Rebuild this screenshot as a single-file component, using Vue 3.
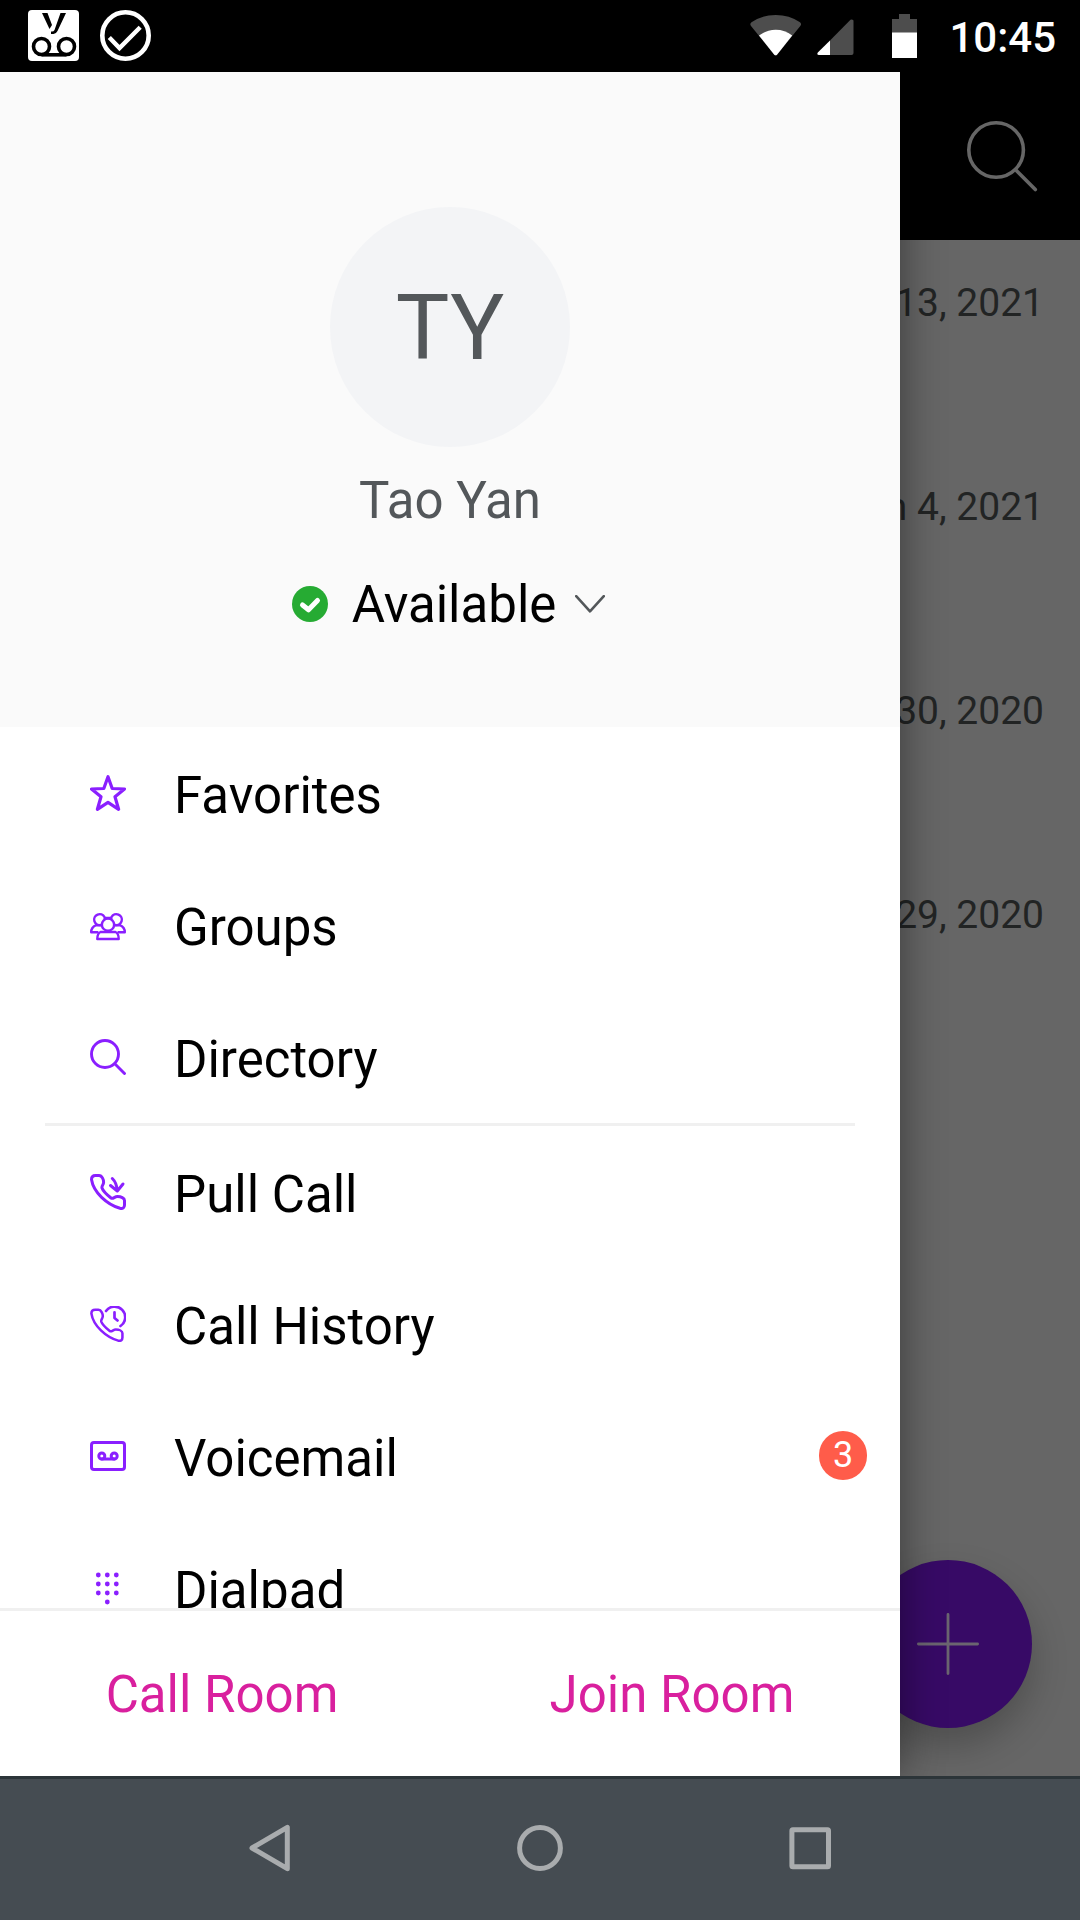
<script setup>
const conversations = ['Jan 13, 2021', 'Jan 4, 2021', 'Dec 30, 2020', 'Dec 29, 2020']

const primary = [
  { label: 'Favorites', icon: 'star' },
  { label: 'Groups', icon: 'groups' },
  { label: 'Directory', icon: 'search' },
]
const secondary = [
  { label: 'Pull Call', icon: 'pull' },
  { label: 'Call History', icon: 'history' },
  { label: 'Voicemail', icon: 'voicemail', badge: 3 },
  { label: 'Dialpad', icon: 'dialpad' },
]
const sections = [primary, secondary]

const handset =
  'M1.5 5.5C1.5 3 3 1.5 5.5 1.5H9C12 1.5 14 6 13.5 9C13.2 11 11.5 12 12 14C13 17 18.500 22 21 24C23 25.500 24.500 22.500 27.500 22.500C31 22.500 34.500 24 34.500 26.500V31C34.500 33.500 33 35 30 34.300C17 30.500 3.500 18.500 1.500 5.500Z'

const dots = []
for (let row = 0; row < 3; row++) {
  for (let col = 0; col < 3; col++) dots.push([8.3 + col * 9, 5 + row * 9])
}
dots.push([17.3, 32])
</script>

<template>
  <div class="screen">
    <header class="status">
      <div class="status-left">
        <svg width="51" height="51" viewBox="0 0 51 51">
          <rect width="51" height="51" rx="4" fill="#fff" />
          <path d="M14 3h5.500l4.500 12-2.500 4zM32.500 3h5.500l-8.500 18q-1.300 2.900-4 2.900h-2.500v-2.300h1q1.700 0 2.500-1.700z" fill="#000" />
          <g fill="none" stroke="#000" stroke-width="3.600">
            <circle cx="13.500" cy="36.500" r="8" />
            <circle cx="38.500" cy="36.500" r="8" />
            <path d="M13.500 44.800h25" />
          </g>
        </svg>
        <svg width="51" height="51" viewBox="0 0 51 51" fill="none" stroke="#fff">
          <circle cx="25.500" cy="25.500" r="23.200" stroke-width="4.600" />
          <path d="M9.300 27.500l10.200 10.500L40.200 17.200" stroke-width="4.400" />
        </svg>
      </div>
      <div class="status-right">
        <svg class="wifi" width="52" height="41" viewBox="0 0 52 41">
          <path d="M1 11Q-.6 9 1.500 7.300Q12 0 25.700 0T50 7.300Q52 9 50.300 11L27 39.700Q25.700 41 24.300 39.700z" fill="#4d4d4d" />
          <path d="M9 20.600Q16.500 14.700 25.700 14.700T42.200 20.600L27 39.700Q25.700 41 24.300 39.700z" fill="#fff" />
        </svg>
        <svg class="signal" width="37" height="36" viewBox="0 0 37 36">
          <path d="M13 36V21.500L33.500.8Q35-.3 36.500 1.500V34Q36.500 36 34.500 36z" fill="#4d4d4d" />
          <path d="M13 36V21.500L.8 33.500Q-.5 36 2 36z" fill="#fff" />
        </svg>
        <svg class="battery" width="25" height="44" viewBox="0 0 25 44">
          <path d="M7 0h11v5h7v14H0V5h7z" fill="#4d4d4d" />
          <path d="M0 18.500h25V44H0z" fill="#fff" />
        </svg>
        <span class="clock">10:45</span>
      </div>
    </header>

    <main class="stage">
      <div class="appbar">
        <svg width="72" height="72" viewBox="0 0 72 72" fill="none" stroke="#666" stroke-width="3.600" stroke-linecap="round">
          <circle cx="30.100" cy="30" r="27.300" />
          <path d="M50.300 50.500L69.300 69.500" />
        </svg>
      </div>
      <ul class="dates">
        <li v-for="d in conversations" :key="d">{{ d }}</li>
      </ul>
      <div class="fab">
        <svg width="64" height="64" viewBox="0 0 64 64" stroke="#6b6570" stroke-width="2.800" stroke-linecap="round">
          <path d="M32 2.400v59.200M2.400 32h59.200" />
        </svg>
      </div>

      <aside class="drawer">
        <section class="profile">
          <div class="avatar">TY</div>
          <div class="name">Tao Yan</div>
          <div class="presence">
            <svg width="36" height="36" viewBox="0 0 36 36">
              <circle cx="18" cy="18" r="18" fill="#26ab33" />
              <path d="M10.500 19l6 4.800 9-9.300" fill="none" stroke="#fff" stroke-width="5" stroke-linecap="round" stroke-linejoin="round" />
            </svg>
            <span class="state">Available</span>
            <svg width="30" height="18" viewBox="0 0 30 18" fill="none" stroke="#53575a" stroke-width="2.600" stroke-linecap="round" stroke-linejoin="round">
              <path d="M1.200 1.200L15 16.400 28.800 1.200" />
            </svg>
          </div>
        </section>

        <nav class="menu">
          <div v-for="(items, i) in sections" :key="i" class="group">
            <div v-for="item in items" :key="item.label" class="row">
              <svg class="icon" width="36" height="36" viewBox="0 0 36 36">
                <path v-if="item.icon === 'star'" d="M18 1.700L22.200 13.500L34.500 14L25 21.800L28.600 34.300L18 27.400L7.400 34.300L11 21.800L1.500 14L13.800 13.500Z" stroke-width="3.200" />
                <g v-else-if="item.icon === 'groups'" stroke-width="2.400">
                  <circle cx="18" cy="17.700" r="6.100" />
                  <path d="M10.700 18A5.500 5.500 0 1 1 14.500 10M25.300 18A5.500 5.500 0 1 0 21.500 10M14.500 11h7" />
                  <path d="M6 18.200C3 19.500 1.200 22 1.200 25.300H7.500M6 18.200H10.800M30 18.200C33 19.500 34.800 22 34.800 25.300H28.500M30 18.200H25.200" />
                  <path d="M10.500 25H25.500C27.700 26 28.700 28.800 28.700 32H7.300C7.300 28.800 8.300 26 10.500 25Z" />
                </g>
                <g v-else-if="item.icon === 'search'" stroke-width="2.900">
                  <circle cx="15" cy="15" r="13.500" />
                  <path d="M24.800 24.800L34.500 34.500" />
                </g>
                <g v-else-if="item.icon === 'pull'" stroke-width="3">
                  <path :d="handset" />
                  <path d="M22.300 4.500Q26.500 8.500 27.300 16.500M20.500 11.500L27.300 17L33 10" />
                </g>
                <g v-else-if="item.icon === 'history'" stroke-width="2.700">
                  <path :d="handset" transform="translate(0 2.400) scale(.94)" />
                  <path d="M16 5A10.600 10.600 0 1 1 30.500 20M24.500 6.300V12L27.500 14.500" />
                </g>
                <g v-else-if="item.icon === 'voicemail'" stroke-width="3">
                  <rect x="1.500" y="4.500" width="33" height="27" rx="2.500" />
                  <circle cx="11.800" cy="18" r="3" />
                  <circle cx="24.200" cy="18" r="3" />
                  <path d="M11.800 21.100h12.400" />
                </g>
                <g v-else class="dots">
                  <circle v-for="(p, k) in dots" :key="k" :cx="p[0]" :cy="p[1]" r="2.400" />
                </g>
              </svg>
              <span class="label">{{ item.label }}</span>
              <span v-if="item.badge" class="badge">{{ item.badge }}</span>
            </div>
          </div>
        </nav>

        <footer class="actions">
          <button type="button">Call Room</button>
          <button type="button">Join Room</button>
        </footer>
      </aside>
    </main>

    <footer class="navbar">
      <svg width="48" height="48" viewBox="0 0 48 48"><path d="M6 24L41.300 3.300V44.700Z" /></svg>
      <svg width="48" height="48" viewBox="0 0 48 48"><circle cx="24" cy="24" r="20.400" /></svg>
      <svg width="48" height="48" viewBox="0 0 48 48"><rect x="5.900" y="5.700" width="36.600" height="37" rx="1" /></svg>
    </footer>
  </div>
</template>

<style>
body {
  margin: 0;
}
</style>

<style scoped>
.screen {
  width: 1080px;
  height: 1920px;
  display: flex;
  flex-direction: column;
  overflow: hidden;
  background: #666;
  font-family: Roboto, "Liberation Sans", sans-serif;
  font-size: 51px;
}
svg {
  display: block;
  flex: none;
}
.status {
  box-sizing: border-box;
  height: 72px;
  flex: none;
  padding: 0 24px 0 28px;
  display: flex;
  justify-content: space-between;
  background: #000;
}
.status-left {
  display: flex;
  gap: 21px;
  padding-top: 10px;
}
.status-right {
  display: flex;
  align-items: flex-start;
}
.wifi {
  margin-top: 15px;
}
.signal {
  margin: 19px 38px 0 15px;
}
.battery {
  margin-top: 14px;
}
.clock {
  margin-left: 32px;
  padding-top: 13px;
  color: #fff;
  font-size: 42px;
  font-weight: 500;
  line-height: 49px;
}
.stage {
  position: relative;
  height: 1704px;
  flex: none;
  overflow: hidden;
}
.appbar {
  height: 168px;
  display: flex;
  justify-content: flex-end;
  align-items: center;
  box-sizing: border-box;
  padding-right: 42px;
  background: #000;
}
.dates {
  list-style: none;
  margin: 0;
  padding: 0 36px 0 0;
  text-align: right;
  font-size: 39px;
  color: #222424;
}
.dates li {
  height: 204px;
  line-height: 126px;
}
.fab {
  position: absolute;
  left: 864px;
  top: 1488px;
  width: 168px;
  height: 168px;
  border-radius: 50%;
  display: flex;
  align-items: center;
  justify-content: center;
  background: #370a66;
  box-shadow: 0 18px 36px rgba(0, 0, 0, 0.23);
}
.drawer {
  position: absolute;
  left: 0;
  top: 0;
  width: 900px;
  height: 1704px;
  display: flex;
  flex-direction: column;
  background: #fff;
  box-shadow: 0 0 40px rgba(0, 0, 0, 0.45);
}
.profile {
  height: 655px;
  flex: none;
  box-sizing: border-box;
  padding-top: 135px;
  display: flex;
  flex-direction: column;
  align-items: center;
  background: #fafafa;
  color: #53575a;
}
.avatar {
  width: 240px;
  height: 240px;
  border-radius: 50%;
  background: #f3f4f6;
  font-size: 90px;
  line-height: 243px;
  text-align: center;
}
.name {
  margin-top: 24px;
  line-height: 60px;
}
.presence {
  margin-top: 43px;
  height: 60px;
  padding-right: 3px;
  display: flex;
  align-items: center;
  color: #000;
}
.state {
  margin: 0 19px 0 24px;
  padding-top: 2px;
  line-height: 60px;
}
.menu {
  flex: 1;
  min-height: 0;
  overflow: hidden;
}
.group + .group::before {
  content: "";
  display: block;
  height: 3px;
  margin: 0 45px;
  background: #f0f0f0;
}
.row {
  height: 132px;
  box-sizing: border-box;
  padding: 0 33px 0 90px;
  display: flex;
  align-items: center;
}
.icon {
  margin-right: 48px;
  fill: none;
  stroke: #8a1fff;
  stroke-linecap: round;
  stroke-linejoin: round;
}
.dots {
  fill: #8a1fff;
  stroke: none;
}
.label {
  flex: 1;
  padding-top: 5px;
  color: #000;
}
.badge {
  width: 48px;
  height: 49px;
  margin-top: -2px;
  border-radius: 25px;
  background: #ff5c4a;
  color: #fff;
  font-size: 36px;
  line-height: 49px;
  text-align: center;
}
.actions {
  height: 165px;
  flex: none;
  border-top: 3px solid #f0f0f0;
  display: flex;
}
.actions button {
  flex: 1;
  padding: 2px 6px 0 0;
  border: 0;
  background: none;
  font: inherit;
  color: #d9209e;
}
.navbar {
  height: 141px;
  flex: none;
  border-top: 3px solid #2c3539;
  display: flex;
  align-items: center;
  justify-content: center;
  gap: 222px;
  background: #454c52;
}
.navbar svg {
  margin-top: -3px;
  fill: none;
  stroke: #a9acae;
  stroke-width: 5;
  stroke-linejoin: round;
}
</style>
